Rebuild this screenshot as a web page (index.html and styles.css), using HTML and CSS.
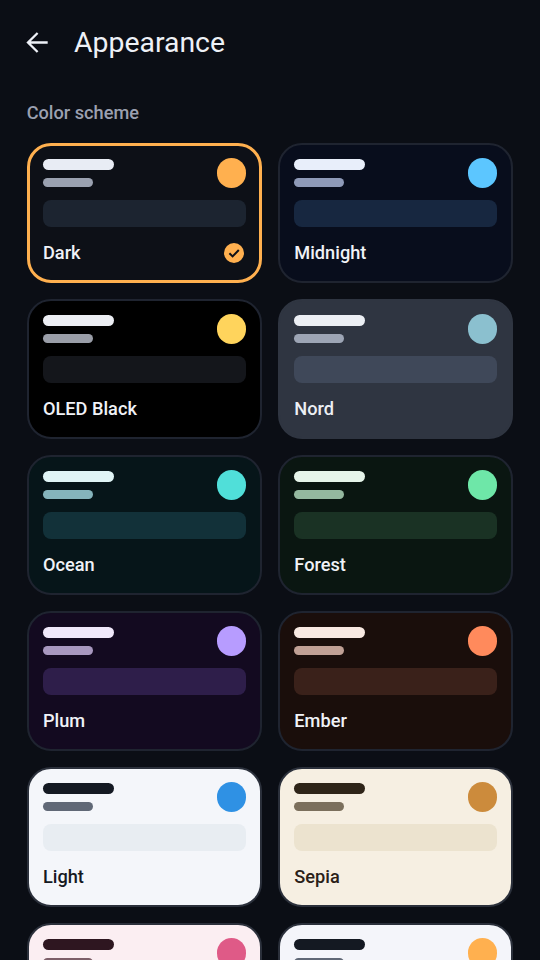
FILE: index.html
```html
<!DOCTYPE html>
<html lang="en">
<head>
<meta charset="utf-8">
<title>Appearance</title>
<link rel="stylesheet" href="styles.css">
</head>
<body>
<div class="screen">
  <header class="topbar">
    <svg class="back" viewBox="0 0 24 24" width="24" height="24" aria-hidden="true"><path d="M21.7 12.5H2M11.6 3 2 12.5l9.6 9.5" fill="none" stroke="currentColor" stroke-width="2.3"/></svg>
    <h1 class="title">Appearance</h1>
  </header>
  <h2 class="section">Color scheme</h2>
  <div class="grid">
    <div class="card t-dark selected">
      <div class="head"><div class="lines"><div class="l1"></div><div class="l2"></div></div><div class="dot"></div></div>
      <div class="bar"></div>
      <div class="foot"><span class="name">Dark</span>
        <svg class="check" viewBox="0 0 20 20" width="20" height="20" aria-hidden="true"><circle cx="10" cy="10" r="10" fill="#ffb04f"/><path d="M5.4 10.3 8.6 13.4 14.8 7" fill="none" stroke="#0d1017" stroke-width="2"/></svg>
      </div>
    </div>
    <div class="card t-midnight">
      <div class="head"><div class="lines"><div class="l1"></div><div class="l2"></div></div><div class="dot"></div></div>
      <div class="bar"></div>
      <div class="foot"><span class="name">Midnight</span></div>
    </div>
    <div class="card t-oled">
      <div class="head"><div class="lines"><div class="l1"></div><div class="l2"></div></div><div class="dot"></div></div>
      <div class="bar"></div>
      <div class="foot"><span class="name">OLED Black</span></div>
    </div>
    <div class="card t-nord">
      <div class="head"><div class="lines"><div class="l1"></div><div class="l2"></div></div><div class="dot"></div></div>
      <div class="bar"></div>
      <div class="foot"><span class="name">Nord</span></div>
    </div>
    <div class="card t-ocean">
      <div class="head"><div class="lines"><div class="l1"></div><div class="l2"></div></div><div class="dot"></div></div>
      <div class="bar"></div>
      <div class="foot"><span class="name">Ocean</span></div>
    </div>
    <div class="card t-forest">
      <div class="head"><div class="lines"><div class="l1"></div><div class="l2"></div></div><div class="dot"></div></div>
      <div class="bar"></div>
      <div class="foot"><span class="name">Forest</span></div>
    </div>
    <div class="card t-plum">
      <div class="head"><div class="lines"><div class="l1"></div><div class="l2"></div></div><div class="dot"></div></div>
      <div class="bar"></div>
      <div class="foot"><span class="name">Plum</span></div>
    </div>
    <div class="card t-ember">
      <div class="head"><div class="lines"><div class="l1"></div><div class="l2"></div></div><div class="dot"></div></div>
      <div class="bar"></div>
      <div class="foot"><span class="name">Ember</span></div>
    </div>
    <div class="card t-light">
      <div class="head"><div class="lines"><div class="l1"></div><div class="l2"></div></div><div class="dot"></div></div>
      <div class="bar"></div>
      <div class="foot"><span class="name">Light</span></div>
    </div>
    <div class="card t-sepia">
      <div class="head"><div class="lines"><div class="l1"></div><div class="l2"></div></div><div class="dot"></div></div>
      <div class="bar"></div>
      <div class="foot"><span class="name">Sepia</span></div>
    </div>
    <div class="card t-rose clipped">
      <div class="head"><div class="lines"><div class="l1"></div><div class="l2"></div></div><div class="dot"></div></div>
    </div>
    <div class="card t-paper clipped">
      <div class="head"><div class="lines"><div class="l1"></div><div class="l2"></div></div><div class="dot"></div></div>
    </div>
  </div>
</div>
</body>
</html>
```
FILE: styles.css
```css
* { box-sizing: border-box; }
html, body { margin: 0; padding: 0; }
body { background: #0b0e15; font-family: Roboto, "Noto Sans", sans-serif; width: 540px; height: 960px; overflow: hidden; }
.screen { padding: 0 26.67px; height: 960px; overflow: hidden; }
.topbar { display: flex; align-items: center; height: 84px; gap: 24px; }
.back { color: #eef1f7; flex: none; margin-left: -0.67px; }
.title { margin: 0; padding-top: 2px; font-size: 28.4px; font-weight: 400; color: #eef1f7; line-height: 1; }
.section { margin: 0; padding-top: 18.33px; height: 58.67px; font-size: 18.2px; line-height: 22px; font-weight: 500; color: #9ba0b0; }
.grid { display: grid; grid-template-columns: 1fr 1fr; gap: 16px; }
.card { --bg: #0d1017; --line: #e8ecf4; --sub: #9aa1b0; --bar: #1c2430; --acc: #ffb04f; --text: #f0f2f7; --border: #1f2430;
  height: 140px; border-radius: 24px; background: var(--bg); border: 2px solid var(--border); padding: 13.67px 14px 0 14.33px; display: flex; flex-direction: column; }
.selected { border: 3px solid #ffb04f; padding: 12.67px 13px 0 13.33px; }
.head { display: flex; justify-content: space-between; align-items: flex-start; height: 41.67px; }
.lines { display: flex; flex-direction: column; padding-top: 1px; gap: 7.67px; }
.l1 { width: 71px; height: 10.67px; border-radius: 6px; background: var(--line); }
.l2 { width: 50px; height: 9.33px; border-radius: 5px; background: var(--sub); }
.dot { width: 29.33px; height: 29.33px; border-radius: 50%; background: var(--acc); }
.bar { height: 27px; border-radius: 8px; background: var(--bar); }
.foot { display: flex; justify-content: space-between; align-items: center; height: 53px; padding-right: 2px; }
.name { font-size: 18.2px; font-weight: 500; color: var(--text); line-height: 22px; }
.check { flex: none; }
.t-midnight { --bg: #080d1c; --line: #e8eefa; --sub: #8e9ab8; --bar: #172740; --acc: #5cc6ff; }
.t-oled { --bg: #000000; --line: #eceef3; --sub: #9a9ea8; --bar: #14161b; --acc: #ffd45c; }
.t-nord { --bg: #2f3541; --line: #eceff4; --sub: #9da5b5; --bar: #3f4859; --acc: #8bc0cf; --text: #eceff4; --border: #2f3541; }
.t-ocean { --bg: #061519; --line: #e0f5f6; --sub: #85b4bc; --bar: #123139; --acc: #50dfd9; }
.t-forest { --bg: #0a1611; --line: #e6f5ea; --sub: #94b89f; --bar: #1a3224; --acc: #6ee7a8; }
.t-plum { --bg: #130a20; --line: #f0e8fa; --sub: #a898bf; --bar: #2e1e4a; --acc: #b79cff; }
.t-ember { --bg: #1a0e0b; --line: #f8e9e2; --sub: #c0a095; --bar: #3a211a; --acc: #ff8a5c; }
.t-light { --bg: #f4f6fa; --line: #141922; --sub: #606876; --bar: #e8edf2; --acc: #2f91e4; --text: #141922; --border: #2b303b; }
.t-sepia { --bg: #f6efe2; --line: #2e2418; --sub: #7b6f5c; --bar: #ece3cf; --acc: #cc8b3c; --text: #2a2118; --border: #2b303b; }
.t-rose { --bg: #fbeef2; --line: #2e1620; --sub: #7d5f69; --bar: #f4e0e6; --acc: #df5a87; --text: #2e1620; --border: #2b303b; }
.t-paper { --bg: #f4f5fa; --line: #141922; --sub: #606876; --bar: #e8edf2; --acc: #ffb04f; --text: #141922; --border: #2b303b; }
```
